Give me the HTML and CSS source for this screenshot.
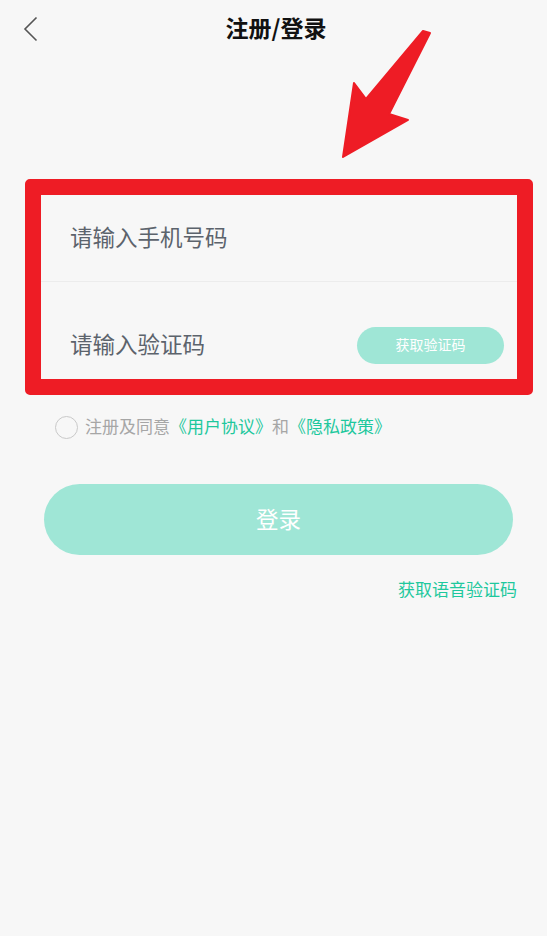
FILE: index.html
```html
<!DOCTYPE html>
<html lang="zh-CN">
<head>
  <meta charset="UTF-8">
  <meta name="viewport" content="width=device-width, initial-scale=1.0">
  <title>注册/登录</title>
  <link rel="stylesheet" href="styles.css">
</head>
<body>
  <header class="topbar">
    <svg class="back" width="20" height="30" viewBox="0 0 20 30">
      <polyline points="13.5,3.5 2,15 13.5,26.5" fill="none" stroke="#555" stroke-width="1.6"/>
    </svg>
    <h1>注册/登录</h1>
  </header>

  <div class="form">
    <div class="row row-phone">
      <span class="placeholder">请输入手机号码</span>
    </div>
    <div class="row row-code">
      <span class="placeholder">请输入验证码</span>
      <button class="code-btn">获取验证码</button>
    </div>
  </div>

  <div class="agree">
    <span class="check"></span>
    <span>注册及同意<a>《用户协议》</a>和<a>《隐私政策》</a></span>
  </div>

  <button class="login-btn">登录</button>

  <div class="voice">
    <a>获取语音验证码</a>
  </div>

  <!-- annotation overlay -->
  <div class="mark-box"></div>
  <svg class="mark-arrow" width="547" height="200" viewBox="0 0 547 200">
    <polygon points="423,31 430,33 389,114 408,120 343,157 354,83 366,99" fill="#ee1c25" stroke="#ee1c25" stroke-width="2" stroke-linejoin="round"/>
  </svg>
</body>
</html>
```

FILE: styles.css
```css
body {
  margin: 0;
  background: #f7f7f7;
  font-family: "Noto Sans CJK SC", "Noto Sans", sans-serif;
  color: #333;
  position: relative;
  min-height: 936px;
}

.topbar {
  height: 56px;
  display: flex;
  align-items: center;
  justify-content: center;
  position: relative;
}

.topbar .back {
  position: absolute;
  left: 23px;
  top: 14px;
}

.topbar h1 {
  margin: 0 0 2px 5px;
  font-size: 23px;
  font-weight: 700;
  color: #111;
}

.form {
  margin: 139px 30px 0;
}

.row {
  display: flex;
  align-items: center;
  justify-content: space-between;
  padding: 0 13px 0 40px;
}

.row-phone {
  height: 86px;
  border-bottom: 1px solid #ececec;
}

.row-code {
  height: 126px;
}

.placeholder {
  font-size: 22.5px;
  color: #5c636c;
  margin-bottom: 4px;
}

.code-btn {
  width: 147px;
  height: 37px;
  border: none;
  border-radius: 19px;
  background: #9fe6d6;
  color: #fff;
  font-family: inherit;
  font-size: 14px;
  padding: 0 0 2px;
}

.agree {
  height: 38px;
  display: flex;
  align-items: center;
  padding-left: 55px;
  font-size: 17px;
  color: #a6a6a6;
}

.agree span:last-child {
  margin-bottom: 3px;
}

.check {
  width: 21px;
  height: 21px;
  border: 1.5px solid #c9c9c9;
  border-radius: 50%;
  margin-right: 7px;
}

.agree a {
  color: #1ec89d;
}

.login-btn {
  display: block;
  margin: 38px 0 0 44px;
  width: 469px;
  height: 71px;
  border: none;
  border-radius: 36px;
  background: #9fe6d6;
  color: #fff;
  font-family: inherit;
  font-size: 22.5px;
  padding: 0 0 4px;
}

.voice {
  margin-top: 22px;
  padding-right: 30px;
  text-align: right;
  font-size: 17px;
  line-height: 24px;
}

.voice a {
  color: #1ec89d;
}

.mark-box {
  position: absolute;
  left: 25px;
  top: 179px;
  width: 508px;
  height: 216px;
  box-sizing: border-box;
  border: 16px solid #ee1c25;
  border-radius: 5px;
}

.mark-arrow {
  position: absolute;
  left: 0;
  top: 0;
}
```
